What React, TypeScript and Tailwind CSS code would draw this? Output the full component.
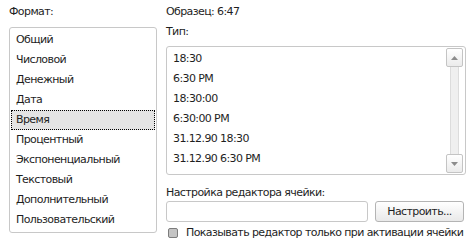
import React from "react";

// Format categories
const formats = [
  "Общий",
  "Числовой",
  "Денежный",
  "Дата",
  "Время",
  "Процентный",
  "Экспоненциальный",
  "Текстовый",
  "Дополнительный",
  "Пользовательский",
];

const types = [
  "18:30",
  "6:30 PM",
  "18:30:00",
  "6:30:00 PM",
  "31.12.90 18:30",
  "31.12.90 6:30 PM",
];

const ScrollBar: React.FC = () => {
  return (
    <div className="flex w-[17px] flex-col items-center py-[1px]">
      <div className="flex h-[19px] w-[17px] items-center justify-center rounded-[2px] border border-[#c4c4c4] bg-gradient-to-b from-white to-[#ebebeb]">
        <svg width="7" height="4" viewBox="0 0 7 4">
          <path d="M0 4 L3.5 0 L7 4 Z" fill="#8c8c8c" />
        </svg>
      </div>
      <div className="w-[9px] flex-1 border-x border-[#dcdcdc] bg-[#efefef]" />
      <div className="flex h-[19px] w-[17px] items-center justify-center rounded-[2px] border border-[#c4c4c4] bg-gradient-to-b from-white to-[#ebebeb]">
        <svg width="7" height="4" viewBox="0 0 7 4">
          <path d="M0 0 L7 0 L3.5 4 Z" fill="#8c8c8c" />
        </svg>
      </div>
    </div>
  );
};

export default function App() {
  return (
    <div className="flex h-[245px] w-[473px] gap-[9px] whitespace-nowrap bg-white pl-[9px] pt-[3px] font-['DejaVu_Sans',sans-serif] text-[11px] tracking-[-0.6px] text-[#1e1e1e]">
      {/* left column */}
      <div className="flex w-[148px] flex-col">
        <div className="h-[24px] leading-[18px]">Формат:</div>
        <ul className="h-[206px] rounded-[3px] border border-[#c8c8c8] px-[1px] py-[2px]">
          {formats.map((f) => (
            <li
              key={f}
              className={
                f === "Время"
                  ? "h-[20px] border border-dotted border-black bg-[#e4e4e4] pl-[4px] leading-[18px]"
                  : "h-[20px] pl-[5px] leading-[20px]"
              }>
              {f}
            </li>
          ))}
        </ul>
      </div>

      {/* right column */}
      <div className="flex w-[300px] flex-col">
        <div className="h-[20px] leading-[18px]">Образец: 6:47</div>
        <div className="h-[23px] leading-[18px]">Тип:</div>
        <div className="flex h-[129px] rounded-[3px] border border-[#c8c8c8] pr-[2px]">
          <ul className="flex-1 py-[2px] pl-[6px]">
            {types.map((t) => (
              <li key={t} className="h-[20px] leading-[20px]">
                {t}
              </li>
            ))}
          </ul>
          <ScrollBar />
        </div>
        <div className="mt-[10px] h-[16px] leading-[16px]">
          Настройка редактора ячейки:
        </div>
        <div className="flex h-[21px] gap-[7px]">
          <div className="w-[202px] rounded-[3px] border border-[#c8c8c8]" />
          <button
            type="button"
            className="w-[89px] rounded-[3px] border border-[#b4b4b4] bg-gradient-to-b from-white to-[#e9e9e9] text-center leading-[19px]">
            Настроить...
          </button>
        </div>
        <label className="mt-[4px] flex h-[14px] items-center gap-[8px] pl-[2px]">
          <span className="h-[10px] w-[10px] rounded-[2px] border border-[#7c7c7c] bg-[#c4c4c4]" />
          <span>Показывать редактор только при активации ячейки</span>
        </label>
      </div>
    </div>
  );
}
